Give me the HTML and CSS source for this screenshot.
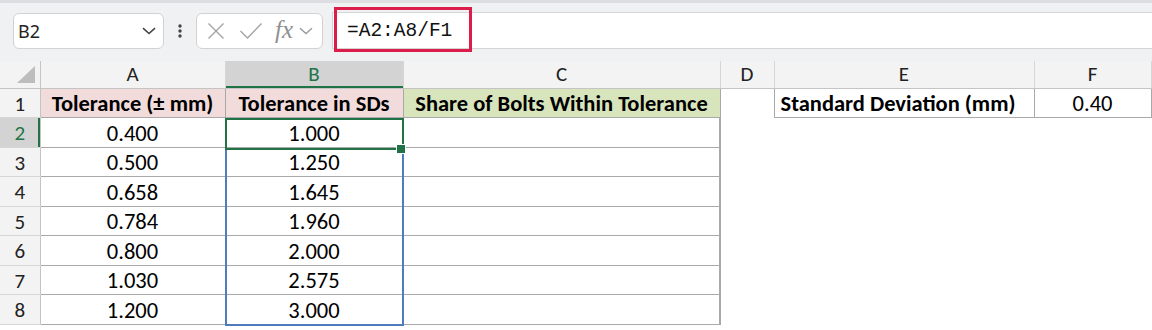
FILE: index.html
```
<!DOCTYPE html>
<html lang="en">
<head>
    <meta charset="UTF-8">
    <title>Bolt Tolerance - Sheet</title>
    <link rel="stylesheet" href="styles.css">
</head>
<body>

    <header class="toolbar">
        <div class="namebox">
            <span class="namebox-text">B2</span>
            <svg class="chevron" width="14" height="8" viewBox="0 0 14 8"><path d="M1 1.2 L7 6.5 L13 1.2" fill="none" stroke="#444" stroke-width="1.6"/></svg>
        </div>
        <div class="dots">
            <svg width="6" height="16" viewBox="0 0 6 16"><circle cx="3" cy="3" r="1.7" fill="#444"/><circle cx="3" cy="8" r="1.7" fill="#444"/><circle cx="3" cy="13" r="1.7" fill="#444"/></svg>
        </div>
        <div class="fxbox">
            <svg class="icon-x" width="18" height="18" viewBox="0 0 18 18"><path d="M1.5 1.5 L16.5 16.5 M16.5 1.5 L1.5 16.5" fill="none" stroke="#a3a3a3" stroke-width="1.4"/></svg>
            <svg class="icon-check" width="24" height="18" viewBox="0 0 24 18"><path d="M1.5 9 L8.5 16 L22.5 1.5" fill="none" stroke="#a3a3a3" stroke-width="1.4"/></svg>
            <span class="fx">fx</span>
            <svg class="chevron" width="14" height="8" viewBox="0 0 14 8"><path d="M1 1.2 L7 6.5 L13 1.2" fill="none" stroke="#9a9a9a" stroke-width="1.4"/></svg>
        </div>
        <div class="formula">
            <span class="formula-text">=A2:A8/F1</span>
        </div>
        <div class="highlight"></div>
    </header>

    <main class="sheet-wrap">
        <table class="sheet">
            <colgroup>
                <col style="width:40px">
                <col style="width:185px">
                <col style="width:178px">
                <col style="width:317px">
                <col style="width:54px">
                <col style="width:260px">
                <col style="width:117px">
            </colgroup>
            <thead>
                <tr>
                    <th class="corner">
                        <svg width="18" height="17" viewBox="0 0 18 17"><path d="M0 17 L18 17 L18 0 Z" fill="#bdbdbd"/></svg>
                    </th>
                    <th class="col-head">A</th>
                    <th class="col-head active">B</th>
                    <th class="col-head">C</th>
                    <th class="col-head">D</th>
                    <th class="col-head">E</th>
                    <th class="col-head">F</th>
                </tr>
            </thead>
            <tbody>
                <tr>
                    <th class="row-head">1</th>
                    <td class="boxed title pink">Tolerance (± mm)</td>
                    <td class="boxed title pink">Tolerance in SDs</td>
                    <td class="boxed title green">Share of Bolts Within Tolerance</td>
                    <td></td>
                    <td class="boxed title left">Standard Deviation (mm)</td>
                    <td class="boxed">0.40</td>
                </tr>
                <tr>
                    <th class="row-head active">2</th>
                    <td class="boxed">0.400</td>
                    <td class="boxed">1.000</td>
                    <td class="boxed right-edge"></td>
                    <td></td><td></td><td></td>
                </tr>
                <tr>
                    <th class="row-head">3</th>
                    <td class="boxed">0.500</td>
                    <td class="boxed">1.250</td>
                    <td class="boxed right-edge"></td>
                    <td></td><td></td><td></td>
                </tr>
                <tr>
                    <th class="row-head">4</th>
                    <td class="boxed">0.658</td>
                    <td class="boxed">1.645</td>
                    <td class="boxed right-edge"></td>
                    <td></td><td></td><td></td>
                </tr>
                <tr>
                    <th class="row-head">5</th>
                    <td class="boxed">0.784</td>
                    <td class="boxed">1.960</td>
                    <td class="boxed right-edge"></td>
                    <td></td><td></td><td></td>
                </tr>
                <tr>
                    <th class="row-head">6</th>
                    <td class="boxed">0.800</td>
                    <td class="boxed">2.000</td>
                    <td class="boxed right-edge"></td>
                    <td></td><td></td><td></td>
                </tr>
                <tr>
                    <th class="row-head">7</th>
                    <td class="boxed">1.030</td>
                    <td class="boxed">2.575</td>
                    <td class="boxed right-edge"></td>
                    <td></td><td></td><td></td>
                </tr>
                <tr>
                    <th class="row-head">8</th>
                    <td class="boxed">1.200</td>
                    <td class="boxed">3.000</td>
                    <td class="boxed right-edge"></td>
                    <td></td><td></td><td></td>
                </tr>
            </tbody>
        </table>

        <!-- reference range + active cell drawn over the grid -->
        <div class="range-box"></div>
        <div class="active-cell"></div>
        <div class="fill-handle"></div>
    </main>

</body>
</html>
```

FILE: styles.css
```
:root {
    --toolbar-bg: #f0f1f3;
    --head-bg: #f3f3f3;
    --head-active: #d3d3d3;
    --excel-green: #217346;
    --range-blue: #4f7bbf;
    --cell-border: #a9a9a9;
    --grid-line: #d6d6d6;
    --pink: #f2dcdb;
    --olive: #d8e4bc;
    --alert-red: #dc1c4b;
}

body {
    margin: 0;
    width: 1152px;
    height: 330px;
    overflow: hidden;
    background: #ffffff;
    font-family: "Carlito", "Lato", "Liberation Sans", sans-serif;
    color: #000;
}

/* ---------- formula bar ---------- */

.toolbar {
    position: relative;
    height: 61px;
    box-sizing: border-box;
    display: flex;
    align-items: flex-start;
    padding: 10px 0 0 13px;
    background: var(--toolbar-bg);
    border-top: 3px solid #dcdee1;
}

.namebox, .fxbox {
    height: 36px;
    box-sizing: border-box;
    background: #fff;
    border: 1px solid #d2d2d2;
    border-radius: 6px;
    display: flex;
    align-items: center;
}
.namebox {
    width: 151px;
    justify-content: space-between;
    padding: 0 7px 0 4px;
}
.namebox-text {
    font-family: "Noto Sans", "Open Sans", sans-serif;
    font-size: 18px;
    color: #222;
}

.dots {
    width: 32px;
    height: 36px;
    display: flex;
    align-items: center;
    justify-content: center;
}

.fxbox {
    width: 127px;
    padding: 0 4px 0 10px;
}
.fxbox .icon-x { margin-right: 14px; }
.fxbox .icon-check { margin-right: 12px; }
.fxbox .fx {
    font-family: "Liberation Serif", "DejaVu Serif", serif;
    font-style: italic;
    font-size: 25px;
    color: #8f8f8f;
    margin-right: 6px;
    line-height: 1;
    padding-bottom: 3px;
}

.formula {
    flex: 1;
    margin-left: 9px;
    margin-top: -1px;
    height: 37px;
    box-sizing: border-box;
    background: #fff;
    border-top: 1px solid #d5d5d5;
    border-bottom: 1px solid #d5d5d5;
    border-left: 1px solid #d5d5d5;
    display: flex;
    align-items: center;
    padding-left: 14px;
}
.formula-text {
    font-family: "Liberation Mono", "DejaVu Sans Mono", monospace;
    font-size: 19.5px;
    color: #111;
}

.highlight {
    position: absolute;
    left: 334px;
    top: 4px;
    width: 138px;
    height: 45px;
    box-sizing: border-box;
    border: 3px solid var(--alert-red);
}

/* ---------- grid ---------- */

.sheet-wrap { position: relative; }

.sheet {
    border-collapse: collapse;
    table-layout: fixed;
    width: 1151px;
}

.sheet th {
    background: var(--head-bg);
    font-weight: 400;
    font-size: 21px;
    color: #222;
    padding: 0;
}
.sheet thead tr { height: 27px; }
.sheet tbody tr { height: 29.5px; }
.sheet tbody th { padding-top: 2px; }

.col-head {
    border-right: 1px solid var(--grid-line);
    border-bottom: 1px solid #c4c4c4;
}
.col-head.active {
    background: var(--head-active);
    color: var(--excel-green);
    box-shadow: inset 0 -2px 0 var(--excel-green);
}
.corner {
    border-right: 1px solid #c4c4c4;
    border-bottom: 1px solid #c4c4c4;
    text-align: right;
    vertical-align: bottom;
}
.corner svg { display: block; margin: 0 5px 5px auto; }

.row-head {
    border-bottom: 1px solid var(--grid-line);
    border-right: 1px solid #c4c4c4;
}
.row-head.active {
    background: var(--head-active);
    color: var(--excel-green);
    box-shadow: inset -2px 0 0 var(--excel-green);
}

.sheet td {
    padding: 3px 6px 0;
    font-size: 22.5px;
    line-height: 1;
    text-align: center;
    white-space: nowrap;
    overflow: hidden;
}
.sheet td.boxed { border: 1px solid var(--cell-border); }
.sheet td.right-edge { border-right: 2px solid var(--cell-border); }
.sheet td.title { font-weight: 700; }
.sheet td.left { text-align: left; }
.sheet td.pink { background: var(--pink); }
.sheet td.green { background: var(--olive); }

.range-box {
    position: absolute;
    left: 225px;
    top: 57px;
    width: 179px;
    height: 208px;
    box-sizing: border-box;
    border: 2px solid var(--range-blue);
}
.active-cell {
    position: absolute;
    left: 225px;
    top: 57px;
    width: 179px;
    height: 32px;
    box-sizing: border-box;
    border: 2px solid var(--excel-green);
}
.fill-handle {
    position: absolute;
    left: 397px;
    top: 84px;
    width: 8px;
    height: 8px;
    background: var(--excel-green);
    outline: 1px solid #fff;
}
```
